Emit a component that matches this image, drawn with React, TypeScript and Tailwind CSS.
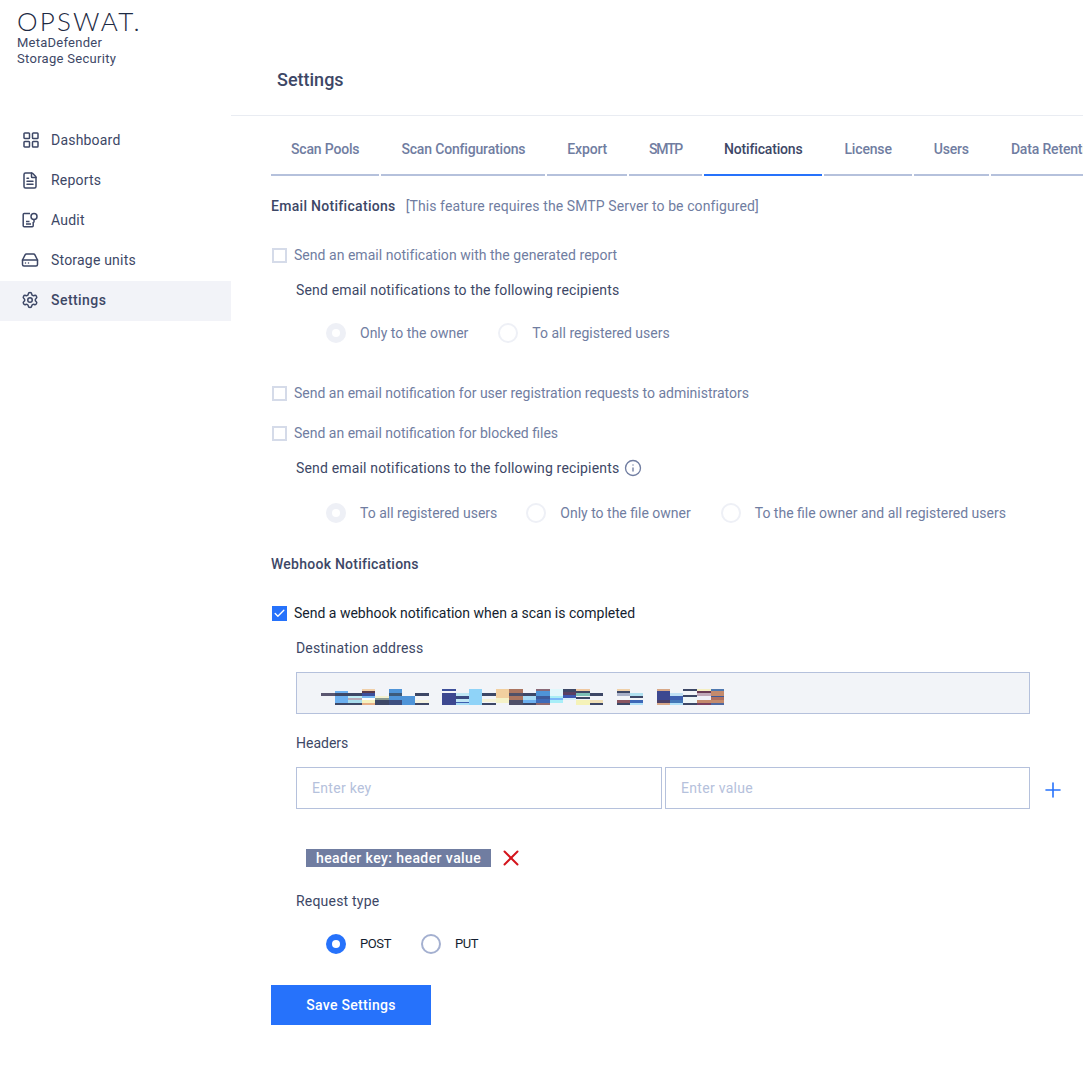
import React from 'react';
import { FileText, HardDrive, Settings, Info, Plus, X, Check } from 'lucide-react';

const tabs = ['Scan Pools', 'Scan Configurations', 'Export', 'SMTP', 'Notifications', 'License', 'Users', 'Data Retention'];

function GridIcon() {
  return (
    <svg width="16" height="16" viewBox="0 0 16 16" fill="none" stroke="currentColor" strokeWidth="1.5" className="ml-px">
      <rect x="1" y="1" width="5.5" height="5.5" rx="0.8" />
      <rect x="9.5" y="1" width="5.5" height="5.5" rx="0.8" />
      <rect x="1" y="9.5" width="5.5" height="5.5" rx="0.8" />
      <rect x="9.5" y="9.5" width="5.5" height="5.5" rx="0.8" />
    </svg>
  );
}

function AuditIcon() {
  return (
    <svg width="18" height="18" viewBox="0 0 18 18" fill="none" stroke="currentColor" strokeWidth="1.5">
      <path d="M9 2.5H3.2a1 1 0 0 0-1 1v11.3a1 1 0 0 0 1 1h8a1 1 0 0 0 1-1V11" />
      <circle cx="13" cy="5.5" r="3" />
      <path d="M13 8.5v3M5 10.5h3.5M5 13h5" />
    </svg>
  );
}

const navItems = [
  { label: 'Dashboard', icon: <GridIcon /> },
  { label: 'Reports', icon: <FileText size={19} strokeWidth={2} /> },
  { label: 'Audit', icon: <AuditIcon /> },
  { label: 'Storage units', icon: <HardDrive size={18} strokeWidth={2} /> },
  { label: 'Settings', icon: <Settings size={18} strokeWidth={2} />, active: true },
];

// blurred-out url in the destination field: [x, width, [y, height, colour]...]
const blocks: [number, number, [number, number, string][]][] = [
  [321, 14, [[693, 3, '#5a5670']]],
  [335, 13, [[691, 2, '#6cb0f0'], [693, 3, '#3d4766'], [696, 7, '#6cb0f0'], [703, 2, '#3d4766']]],
  [348, 14, [[693, 3, '#3d4766'], [696, 2, '#c0eef5'], [698, 2, '#b8aab8'], [700, 3, '#a8dcec'], [703, 2, '#3d4766']]],
  [362, 13, [[689, 2, '#f0cfa8'], [691, 2, '#5a3a4a'], [693, 3, '#3d4f9a'], [696, 2, '#7ab8f0'], [698, 2, '#ffffff'], [700, 3, '#f5f2c0'], [703, 2, '#e8b088']]],
  [375, 14, [[696, 2, '#f5f2d0'], [698, 2, '#8a9a90'], [700, 5, '#3d4766']]],
  [389, 13, [[689, 4, '#4f94d8'], [693, 3, '#3d5a7a'], [696, 4, '#4f94d8'], [700, 5, '#3d4f80']]],
  [402, 13, [[696, 9, '#4f94d8']]],
  [415, 14, [[693, 3, '#3d4766'], [700, 3, '#f5f2e0'], [703, 2, '#3d4766']]],
  [442, 14, [[689, 2, '#3d4f9a'], [693, 12, '#3d4890']]],
  [456, 13, [[693, 3, '#c0e8f5'], [696, 3, '#3a4a80'], [699, 3, '#bfe6f5'], [702, 1, '#3d5fb0'], [703, 2, '#a8dcf5']]],
  [469, 13, [[689, 16, '#8fd3f8']]],
  [482, 14, [[693, 3, '#3d4766'], [699, 3, '#f5f2d8'], [703, 2, '#3d4766']]],
  [496, 13, [[689, 9, '#f2cf9f'], [698, 5, '#f5f2c8']]],
  [509, 14, [[689, 4, '#ab7560'], [693, 3, '#4f5068'], [696, 4, '#ab7560'], [700, 5, '#4f5068']]],
  [523, 13, [[693, 3, '#3d4766'], [696, 4, '#a8dcf5'], [700, 3, '#6cb0f0'], [703, 2, '#3d4766']]],
  [536, 14, [[689, 2, '#8a6a78'], [691, 5, '#4f94d8'], [696, 3, '#3d5a9a'], [699, 4, '#3d6ab8'], [703, 2, '#8f6a70']]],
  [550, 13, [[689, 7, '#e0f7fb'], [696, 2, '#a8eef5'], [698, 2, '#7ab8f8'], [700, 3, '#a8eef8']]],
  [563, 13, [[689, 3, '#3d4766'], [692, 3, '#5a4060'], [695, 3, '#3d58b0'], [698, 2, '#d8f0fa']]],
  [576, 14, [[689, 2, '#f0c8a0'], [691, 2, '#3d4766'], [693, 3, '#7dc0b8'], [697, 2, '#3d4766'], [700, 5, '#f5f2b8']]],
  [590, 13, [[693, 3, '#3d4766'], [700, 3, '#f0e0b8'], [703, 2, '#3d4766']]],
  [617, 13, [[689, 2, '#f0d0a8'], [691, 2, '#3d4766'], [693, 3, '#a8b0c8'], [700, 3, '#8a5560'], [703, 2, '#3d4766']]],
  [630, 13, [[693, 3, '#b0e0f0'], [696, 2, '#3d4766'], [700, 3, '#3d68b8'], [703, 2, '#b0e0f8']]],
  [657, 13, [[689, 2, '#d8a888'], [691, 9, '#3d4890'], [700, 3, '#4a4068'], [703, 2, '#d8a888']]],
  [670, 13, [[693, 3, '#c0e0f5'], [696, 4, '#3d5fb0'], [700, 3, '#4478b8'], [703, 2, '#b0e0f8']]],
  [683, 14, [[689, 2, '#3d4766'], [695, 2, '#3d4766'], [697, 6, '#eef6f8'], [703, 2, '#3d4766']]],
  [697, 14, [[689, 2, '#f5efc0'], [691, 2, '#6a3a55'], [693, 3, '#c0a8b8'], [696, 4, '#f0f0f8'], [700, 3, '#c48a6c'], [703, 2, '#7a4060']]],
  [711, 13, [[689, 2, '#4f78b0'], [691, 5, '#c48a6c'], [696, 1, '#3d5a9a'], [697, 3, '#b07060'], [700, 3, '#c48a6c'], [703, 2, '#4f68a0']]],
];

function BlurredAddress() {
  return (
    <svg width="404" height="22" viewBox="321 684 404 22" className="mt-1">
      {blocks.map(([x, w, parts]) =>
        parts.map(([y, h, c]) => <rect key={`${x}-${y}`} x={x} y={y} width={w} height={h} fill={c} />),
      )}
    </svg>
  );
}

function Checkbox({ checked = false }: { checked?: boolean }) {
  if (checked) {
    return (
      <span className="w-[15px] h-[15px] ml-px bg-[#2672fb] flex items-center justify-center shrink-0 text-white">
        <Check size={13} strokeWidth={2.5} />
      </span>
    );
  }
  return <span className="w-[15px] h-[15px] ml-px border-2 border-[#d5dbe9] shrink-0"></span>;
}

function Radio({ label, checked = false, enabled = false }: { label: string; checked?: boolean; enabled?: boolean }) {
  let dot;
  if (enabled && checked) {
    dot = (
      <span className="w-5 h-5 rounded-full bg-[#2672fb] flex items-center justify-center shrink-0">
        <span className="w-2 h-2 rounded-full bg-white"></span>
      </span>
    );
  } else if (enabled) {
    dot = <span className="w-5 h-5 rounded-full border-2 border-[#a4b0d0] shrink-0"></span>;
  } else if (checked) {
    dot = (
      <span className="w-5 h-5 rounded-full bg-[#eef0f6] flex items-center justify-center shrink-0">
        <span className="w-2 h-2 rounded-full bg-white"></span>
      </span>
    );
  } else {
    dot = <span className="w-5 h-5 rounded-full border-2 border-[#eef0f6] shrink-0"></span>;
  }
  return (
    <label className="flex items-center gap-[14px]">
      {dot}
      <span className={enabled ? 'text-[#141e2f] text-[13px] tracking-[-0.4px]' : 'text-[#707da1]'}>{label}</span>
    </label>
  );
}

function CheckRow({ label, checked = false, wide = false }: { label: string; checked?: boolean; wide?: boolean }) {
  return (
    <div className="flex items-center gap-[7px] h-5">
      <Checkbox checked={checked} />
      <span className={`${checked ? 'text-[#141e2f]' : 'text-[#707da1]'} ${wide ? 'tracking-[0.03px]' : ''}`}>{label}</span>
    </div>
  );
}

export default function App() {
  return (
    <div className="w-[1083px] h-[1077px] overflow-hidden flex bg-white text-[14px] leading-5 text-[#3d4766] font-['Roboto',sans-serif]">
      {/* Sidebar */}
      <aside className="w-[231px] shrink-0">
        <div className="pl-[17px] pt-[10px] h-[121px]">
          <div className="text-[26px] leading-[23px] tracking-[2.2px] font-light font-['Lato',sans-serif] text-[#1d2a44]">OPSWAT.</div>
          <div className="mt-[2px] text-[13px] leading-4 tracking-[0.25px]">MetaDefender</div>
          <div className="text-[13px] leading-4 tracking-[0.3px]">Storage Security</div>
        </div>
        <nav className="tracking-[0.2px]">
          {navItems.map((item) => (
            <div
              key={item.label}
              className={`h-10 pl-[21px] pb-[2px] flex items-center gap-[12px] ${item.active ? 'bg-[#f2f3f8] font-medium tracking-[0.45px]' : ''}`}
            >
              <span className="w-[18px] flex justify-center">{item.icon}</span>
              <span>{item.label}</span>
            </div>
          ))}
        </nav>
      </aside>

      {/* Main */}
      <main className="flex-1 min-w-0">
        <header className="h-[116px] border-b border-[#e9ecf2] pl-[46px] pt-[69px]">
          <h1 className="text-[18px] leading-[22px] font-medium text-[#3d4766]">Settings</h1>
        </header>

        <div className="pl-10">
          <div className="flex gap-[2px] h-[60px] whitespace-nowrap tracking-[-0.17px]">
            {tabs.map((t) => (
              <div
                key={t}
                className={`px-5 pt-[23px] border-b-2 font-medium ${t === 'SMTP' ? 'tracking-[-1.25px]' : ''} ${t === 'Notifications' ? 'border-[#2672fb] text-[#3d4766]' : 'border-[#b5c1dc] text-[#707da1]'}`}
              >
                {t}
              </div>
            ))}
          </div>

          <div className="mt-5 flex items-center gap-[10px] h-5">
            <span className="font-medium tracking-[0.3px]">Email Notifications</span>
            <span className="text-[#707da1] tracking-[0.1px]">[This feature requires the SMTP Server to be configured]</span>
          </div>

          <div className="mt-[29px]">
            <CheckRow label="Send an email notification with the generated report" wide />
            <div className="pl-[25px] mt-[15px] h-5 tracking-[0.17px]">Send email notifications to the following recipients</div>
            <div className="pl-[55px] mt-[23px] flex gap-[30px] h-5">
              <Radio label="Only to the owner" checked />
              <Radio label="To all registered users" />
            </div>
          </div>

          <div className="mt-[40px]">
            <CheckRow label="Send an email notification for user registration requests to administrators" />
          </div>
          <div className="mt-5">
            <CheckRow label="Send an email notification for blocked files" />
            <div className="pl-[25px] mt-[15px] h-5 flex items-center gap-[5px] tracking-[0.17px]">
              Send email notifications to the following recipients
              <Info size={18} strokeWidth={1.8} className="text-[#707da1]" />
            </div>
            <div className="pl-[55px] mt-[25px] flex gap-[29px] h-5">
              <Radio label="To all registered users" checked />
              <Radio label="Only to the file owner" />
              <div className="ml-px">
                <Radio label="To the file owner and all registered users" />
              </div>
            </div>
          </div>

          <div className="mt-[31px] h-5 font-medium tracking-[0.25px]">Webhook Notifications</div>

          <div className="mt-[29px]">
            <CheckRow label="Send a webhook notification when a scan is completed" checked />
          </div>

          <div className="pl-[25px]">
            <div className="mt-[15px] h-5 tracking-[0.16px]">Destination address</div>
            <div className="mt-[14px] h-[42px] w-[734px] border border-[#b5c1dc] bg-[#f2f4f8] flex items-center pl-6">
              <BlurredAddress />
            </div>

            <div className="mt-[19px] h-5">Headers</div>
            <div className="mt-[14px] flex items-center tracking-[0.3px]">
              <div className="w-[366px] h-[42px] border border-[#b5c1dc] pl-[15px] flex items-center text-[#b5c1dc]">Enter key</div>
              <div className="ml-[3px] w-[365px] h-[42px] border border-[#b5c1dc] pl-[15px] flex items-center text-[#b5c1dc]">Enter value</div>
              <Plus size={24} strokeWidth={1.6} className="ml-[11px] mt-1 text-[#2672fb]" />
            </div>

            <div className="mt-[40px] ml-[10px] flex items-center gap-[7px] h-[18px]">
              <span className="bg-[#707da1] text-white font-medium px-[10px] h-[18px] leading-[18px] tracking-[0.42px] whitespace-nowrap">header key: header value</span>
              <X size={26} strokeWidth={1.8} className="text-[#d4141c]" />
            </div>

            <div className="mt-[24px] h-5 tracking-[0.2px]">Request type</div>
            <div className="pl-[30px] mt-[23px] flex gap-[30px] h-5">
              <Radio label="POST" checked enabled />
              <Radio label="PUT" enabled />
            </div>
          </div>

          <button className="mt-[31px] w-40 h-10 bg-[#2672fb] text-white font-medium tracking-[0.3px]">Save Settings</button>
        </div>
      </main>
    </div>
  );
}
